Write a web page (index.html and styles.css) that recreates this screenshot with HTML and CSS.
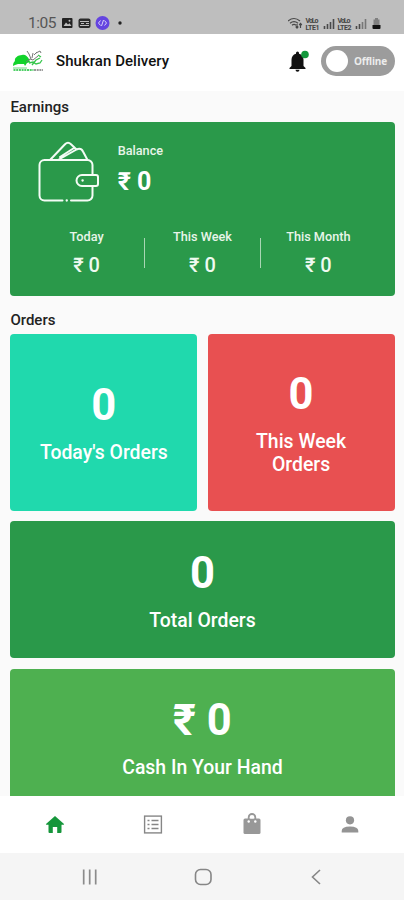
FILE: index.html
```html
<!DOCTYPE html>
<html lang="en">
<head>
<meta charset="utf-8">
<title>Shukran Delivery</title>
<link rel="stylesheet" href="styles.css">
</head>
<body>
<div class="phone">
  <div class="status">
    <span class="time">1:05</span>
    <svg class="left-icons" width="64" height="16" viewBox="0 0 64 16">
      <rect x="2" y="3" width="10.500" height="10" rx="1" fill="#222"/>
      <path d="M3.500 11l2.500-3.500 2 2 1.500-1.200 2 2.700z" fill="#bebebe"/>
      <circle cx="9.500" cy="5.700" r="1" fill="#bebebe"/>
      <rect x="18.500" y="3.500" width="12" height="9.500" rx="2" fill="#2b2b2b"/>
      <path d="M20 6.500h9M20 10.500h9M21 8.500h3M26 8.500h3" stroke="#bebebe" fill="none"/>
      <circle cx="42.500" cy="8" r="7" fill="#6444e0"/>
      <path d="M40.500 5.500l-2 2.500 2 2.500M44.500 5.500l2 2.500-2 2.500M43.500 5l-2 6" stroke="#d9d2fa" fill="none"/>
      <circle cx="60" cy="8" r="1.700" fill="#222"/>
    </svg>
    <svg class="right-icons" width="96" height="16" viewBox="0 0 96 16">
      <g fill="none" stroke="#484848" stroke-width="1.200">
        <path d="M0 6q6-5 12 0M2 8.300q4-3.300 8 0M4 10.300q2-1.700 4 0"/>
        <path d="M9 9v4M7.700 11.500l1.300 1.500 1.300-1.500M12.500 13V8.500M11.200 10l1.300-1.500 1.300 1.500"/>
      </g>
      <g class="lte" fill="#444">
        <text x="17.500" y="7.500" textLength="13">VoLo</text><text x="17.500" y="14.500" textLength="14">LTE1</text>
        <text x="49.500" y="7.500" textLength="13">VoLo</text><text x="49.500" y="14.500" textLength="14">LTE2</text>
      </g>
      <path d="M36.500 14v-3M39.500 14V9M42.500 14V7M45.500 14V4" stroke="#4a4a4a" stroke-width="1.600"/>
      <path d="M68.500 14v-3M71.500 14V9" stroke="#4a4a4a" stroke-width="1.600"/>
      <path d="M74.500 14V7M77.500 14V4" stroke="#777" stroke-width="1.600"/>
      <path d="M85.500 4.500h1.500V3h3v1.500h1.500V10h-6z" fill="#808080"/>
      <path d="M84.500 10h8v3q0 1-1 1h-6q-1 0-1-1z" fill="#111"/>
    </svg>
  </div>

  <header class="header">
    <svg class="logo" width="32" height="26" viewBox="0 0 32 26">
      <path d="M1 18c0-3 1-4 2-5-1-3 3-6 7-6 3-1 5 1 7 4l1 3-3 1-2 3-1-2H6l-3 1z" fill="#12d32b"/>
      <path d="M14 14l4-3 3 1 5-4M19 11l-2-5-2-3M20 10l1-5M24 5l4-2 1 2M22 7l3-3" stroke="#777" fill="none"/>
      <path d="M17 15l4-1 3 2 4-1 2-3M20 17l4-5 4-2M26 7l3 2" stroke="#36c64b" stroke-width="1.300" fill="none"/>
      <path d="M1 20h14" stroke="#6fd680" fill="none"/>
      <path d="M1.500 22h20" stroke="#4fcf66" stroke-width="2" stroke-dasharray="2 .7" fill="none"/>
      <path d="M22 22h9" stroke="#999" stroke-width="2" stroke-dasharray="2 .7" fill="none"/>
    </svg>
    <h1 class="title">Shukran Delivery</h1>
    <svg class="bell" width="22" height="24" viewBox="0 0 22 24">
      <path d="M8 4.700V4a1.500 1.500 0 0 1 3 0v.7c3 .8 4.500 3 4.500 6V17l2 2v1H1.500v-1l2-2v-6.300c0-3 1.500-5.200 4.500-6z" fill="#111"/>
      <path d="M7.500 20.700h4q0 2-2 2t-2-2z" fill="#111"/>
      <circle cx="17" cy="5.500" r="3.800" fill="#12983b"/>
    </svg>
    <div class="switch"><span class="knob"></span><span class="switch-label">Offline</span></div>
  </header>

  <main class="content">
    <h2 class="section">Earnings</h2>
    <section class="earnings">
      <div class="balance">
        <svg width="62" height="64" viewBox="0 0 62 64" fill="none" stroke="#f4fcf5" stroke-width="2" stroke-linecap="round" stroke-linejoin="round">
          <path d="M24.500 61.500H6.500a5 5 0 0 1-5-5V26a5 5 0 0 1 5-5h43a5 5 0 0 1 5 5v10M54.500 47v9.500a5 5 0 0 1-5 5H33"/>
          <path d="M44 36h14a2 2 0 0 1 2 2v7a2 2 0 0 1-2 2H44a5.500 5.500 0 0 1 0-11z"/>
          <path d="M12 21L27 5.200q3-3 6 0l5.500 5.300M20 21l18.500-10.500q4.500-2 6.500 2L49.500 21M22 18L36 9"/>
          <path d="M28.700 61.500h.1M44.500 41.500h.2" stroke-width="2.300"/>
        </svg>
        <div>
          <div class="small">Balance</div>
          <div class="amount">₹ 0</div>
        </div>
      </div>
      <div class="periods">
        <div class="period"><div class="small">Today</div><div class="value">₹ 0</div></div>
        <span class="rule"></span>
        <div class="period"><div class="small">This Week</div><div class="value">₹ 0</div></div>
        <span class="rule"></span>
        <div class="period"><div class="small">This Month</div><div class="value">₹ 0</div></div>
      </div>
    </section>
    <h2 class="section orders">Orders</h2>
    <div class="tiles">
      <section class="tile teal"><div class="count">0</div><div class="label">Today's Orders</div></section>
      <section class="tile red"><div class="count">0</div><div class="label">This Week Orders</div></section>
      <section class="tile wide green"><div class="count">0</div><div class="label">Total Orders</div></section>
      <section class="tile wide light"><div class="count">₹ 0</div><div class="label">Cash In Your Hand</div></section>
    </div>
  </main>

  <nav class="tabs">
    <svg width="24" height="24" viewBox="0 0 24 24" fill="#16963b"><path d="M12 4l9 8q.4.800-.5.800H18.500V20q0 1-1 1h-3.300v-6h-4.400v6H6.500q-1 0-1-1v-7.200H3.500q-.9 0-.5-.8z"/></svg>
    <svg width="24" height="24" viewBox="0 0 24 24" fill="none" stroke="#868686"><rect x="3.600" y="4.100" width="16.800" height="16.800" stroke-width="1.400"/><path d="M6.500 8.500h2M10.500 8.500h7M6.500 12.500h2M10.500 12.500h7M6.500 16.500h2M10.500 16.500h7" stroke-width="1.300"/></svg>
    <svg width="24" height="24" viewBox="0 0 24 24"><path d="M5 6.500h14q1.500 0 1.500 1.500v12.500Q20.500 22 19 22H5q-1.500 0-1.500-1.500V8Q3.500 6.500 5 6.500z" fill="#989898"/><path d="M8.700 9V5.300a3.300 3.300 0 0 1 6.600 0V9" fill="none" stroke="#989898" stroke-width="1.800"/><circle cx="8.700" cy="9.500" r="1.200" fill="#fff"/><circle cx="15.300" cy="9.500" r="1.200" fill="#fff"/><path d="M10 6.500q2-2.500 4 0z" fill="#fff"/></svg>
    <svg width="24" height="24" viewBox="0 0 24 24" fill="#949494"><circle cx="12" cy="8.300" r="4.100"/><path d="M3.700 20.500V19q0-4.500 8.300-4.500t8.300 4.500v1.500z"/></svg>
  </nav>
  <div class="system">
    <svg width="24" height="24" viewBox="0 0 24 24" fill="none" stroke="#8b8b8b" stroke-width="1.700"><path d="M5.700 4.500v15M11.700 4.500v15M17.700 4.500v15"/></svg>
    <svg width="24" height="24" viewBox="0 0 24 24" fill="none" stroke="#868686" stroke-width="1.600"><rect x="4.500" y="4.500" width="15.500" height="15" rx="5"/></svg>
    <svg width="24" height="24" viewBox="0 0 24 24" fill="none" stroke="#868686" stroke-width="1.600"><path d="M16 5l-7.500 7 7.500 7"/></svg>
  </div>
</div>
</body>
</html>
```
FILE: styles.css
```css
* { box-sizing: border-box; }
body { margin: 0; background: #fafafa; font-family: Roboto, sans-serif; font-weight: 500; }
svg { display: block; flex: none; }
h1, h2 { margin: 0; font-weight: 500; }
.phone { width: 404px; height: 900px; display: flex; flex-direction: column; overflow: hidden; }
.status { height: 33.5px; flex: none; background: #bebebe; display: flex; align-items: flex-start; padding: 15px 20px 0 28px; }
.time { font-size: 15.5px; line-height: 16px; font-weight: 400; color: #555; width: 32px; letter-spacing: -.5px; }
.right-icons { margin-left: auto; }
.lte { font-size: 7px; font-weight: 700; }
.header { height: 57.500px; flex: none; background: #fff; display: flex; align-items: center; padding: 0 9.500px 3px 12px; }
.title { font-size: 15px; line-height: 20px; color: #111; margin-left: 12px; letter-spacing: .05px; }
.bell { margin-left: auto; }
.switch { width: 74px; height: 30px; margin-left: 11px; border-radius: 15px; background: #9c9c9c; display: flex; align-items: center; padding-left: 5.500px; gap: 6px; }
.knob { width: 22px; height: 22px; border-radius: 50%; background: #fff; }
.switch-label { font: 700 10px/14px "Open Sans", sans-serif; letter-spacing: -.2px; color: #ececec; }
.content { flex: 1; min-height: 0; overflow: hidden; padding: 6px 9.500px 0 10.400px; }
.section { font-size: 15px; line-height: 20px; height: 24.500px; color: #222; }
.earnings { height: 174.500px; border-radius: 4px; background: #2a994a; color: #fff; padding-top: 17px; }
.balance { display: flex; gap: 18px; padding-left: 27.300px; }
.small { font-size: 12.700px; line-height: 16px; padding-top: 4px; color: #e8f5e9; }
.amount { font-size: 25px; line-height: 28px; font-weight: 700; margin-top: 9.500px; }
.periods { display: flex; margin: 22px 19px 0; }
.period { flex: 1; text-align: center; }
.period .value { font-size: 20px; line-height: 24px; margin-top: 8.500px; color: #effaf0; }
.rule { width: 1.500px; height: 30px; margin-top: 13px; background: #a9d6b4; }
.orders { margin-top: 14px; height: 24px; }
.tiles { display: grid; grid-template-columns: 1fr 1fr; grid-template-rows: 176.500px 137.500px 137.500px; gap: 10.300px; }
.tile { border-radius: 4px; color: #fff; display: flex; flex-direction: column; align-items: center; justify-content: center; text-align: center; }
.wide { grid-column: 1 / -1; }
.teal { background: #20d9ad; }
.red { background: #e85051; }
.green { background: #2a994a; }
.light { background: #4eb050; }
.count { font-size: 43.500px; line-height: 52px; font-weight: 700; }
.label { font-size: 19.400px; line-height: 23px; margin-top: 9px; max-width: 140px; }
.wide .label { max-width: none; }
.tabs { height: 57px; flex: none; background: #fff; display: flex; justify-content: space-between; padding: 16px 42px 0 42.500px; }
.system { height: 47px; flex: none; background: #f5f5f5; display: flex; justify-content: space-between; padding: 11.500px 76px 0 78px; }
```
